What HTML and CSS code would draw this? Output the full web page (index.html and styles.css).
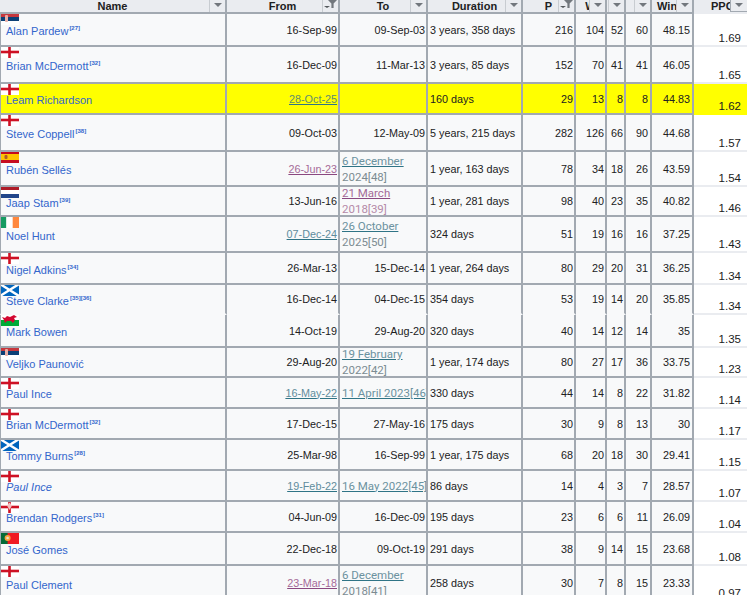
FILE: index.html
```html
<!DOCTYPE html>
<html lang="en">
<head>
<meta charset="utf-8">
<title>Managers</title>
<link rel="stylesheet" href="styles.css">
</head>
<body>
<svg class="defs" aria-hidden="true">
  <symbol id="eng" viewBox="0 0 19 12"><rect width="19" height="12" fill="#fff"/><rect x="8.2" width="2.6" height="12" fill="#ce1124"/><rect y="4.7" width="19" height="2.6" fill="#ce1124"/></symbol>
  <symbol id="srb" viewBox="0 0 19 12"><rect width="19" height="4" fill="#c6363c"/><rect y="4" width="19" height="4" fill="#0c4076"/><rect y="8" width="19" height="4" fill="#fff"/><rect x="5" y="2" width="3" height="7" rx="1" fill="#e8b0a8"/></symbol>
  <symbol id="esp" viewBox="0 0 19 12"><rect width="19" height="12" fill="#c60b1e"/><rect y="3" width="19" height="6" fill="#ffc400"/><rect x="4.5" y="4" width="3" height="4" rx="1" fill="#ad5a2a"/></symbol>
  <symbol id="ned" viewBox="0 0 19 12"><rect width="19" height="4" fill="#ae1c28"/><rect y="4" width="19" height="4" fill="#fff"/><rect y="8" width="19" height="4" fill="#21468b"/></symbol>
  <symbol id="irl" viewBox="0 0 19 12"><rect width="6.4" height="12" fill="#169b62"/><rect x="6.4" width="6.3" height="12" fill="#fff"/><rect x="12.7" width="6.3" height="12" fill="#ff883e"/></symbol>
  <symbol id="sco" viewBox="0 0 19 12"><rect width="19" height="12" fill="#0065bd"/><path d="M0 0L19 12M19 0L0 12" stroke="#fff" stroke-width="2.4"/></symbol>
  <symbol id="wal" viewBox="0 0 19 12"><rect width="19" height="6" fill="#fff"/><rect y="6" width="19" height="6" fill="#00ab39"/><path d="M2 3l3 1 2-2 3 1 4-2 3 2-3 1 1 2-2 3-2-2-4 0-2 2-1-3z" fill="#d30731"/></symbol>
  <symbol id="por" viewBox="0 0 19 12"><rect width="19" height="12" fill="#f01a22"/><rect width="7.6" height="12" fill="#046a38"/><circle cx="7.6" cy="6" r="3" fill="#f7a33a"/><circle cx="7.6" cy="6" r="1.3" fill="#e8e0d0"/></symbol>
  <symbol id="nir" viewBox="0 0 19 12"><rect width="19" height="12" fill="#fff"/><rect x="8.2" width="2.6" height="12" fill="#ce1124"/><rect y="4.7" width="19" height="2.6" fill="#ce1124"/><path d="M9.5 1.5l2.5 3-2.5 4.5-2.5-4.5z" fill="#f3c0c0"/></symbol>
</svg>
<table class="managers">
  <colgroup>
    <col class="c-name"><col class="c-from"><col class="c-to"><col class="c-dur"><col class="c-p"><col class="c-w"><col class="c-d"><col class="c-l"><col class="c-win"><col class="c-ppg">
  </colgroup>
  <thead>
    <tr class="head">
      <th>Name<span class="btn b-name"><i class="tri"></i></span></th>
      <th>From<span class="btn b-from"><i class="tri small"></i><svg class="funnel" viewBox="0 0 9 8"><path d="M0 0H9L5.6 3.6V8H3.4V3.6z"/></svg></span></th>
      <th>To<span class="btn b-to"><i class="tri"></i></span></th>
      <th>Duration<span class="btn b-dur"><i class="tri"></i></span></th>
      <th>P<span class="btn b-p"><i class="tri small"></i><svg class="funnel" viewBox="0 0 9 8"><path d="M0 0H9L5.6 3.6V8H3.4V3.6z"/></svg></span></th>
      <th>W<span class="btn b-w"><i class="tri"></i></span></th>
      <th>D<span class="btn b-d"><i class="tri"></i></span></th>
      <th>L<span class="btn b-l"><i class="tri"></i></span></th>
      <th>Win%<span class="btn b-win"><i class="tri"></i></span></th>
      <th class="ppg-h">PPG<span class="btn b-ppg"><i class="tri"></i></span></th>
    </tr>
  </thead>
  <tbody>
    <tr class="h33">
      <td class="name"><svg class="flag"><use href="#srb"/></svg><a href="#">Alan Pardew</a><sup>[27]</sup></td>
      <td class="num">16-Sep-99</td><td class="num">09-Sep-03</td><td class="dur">3 years, 358 days</td>
      <td class="num">216</td><td class="num">104</td><td class="num">52</td><td class="num pad">60</td><td class="num pad">48.15</td><td class="ppg">1.69</td>
    </tr>
    <tr class="h37">
      <td class="name"><svg class="flag"><use href="#eng"/></svg><a href="#">Brian McDermott</a><sup>[32]</sup></td>
      <td class="num">16-Dec-09</td><td class="num">11-Mar-13</td><td class="dur">3 years, 85 days</td>
      <td class="num">152</td><td class="num">70</td><td class="num">41</td><td class="num pad">41</td><td class="num pad">46.05</td><td class="ppg">1.65</td>
    </tr>
    <tr class="h31 current">
      <td class="name"><svg class="flag"><use href="#eng"/></svg><a href="#">Leam Richardson</a></td>
      <td class="num"><a class="date" href="#">28-Oct-25</a></td><td class="num"></td><td class="dur">160 days</td>
      <td class="num">29</td><td class="num">13</td><td class="num">8</td><td class="num pad">8</td><td class="num pad">44.83</td><td class="ppg">1.62</td>
    </tr>
    <tr class="h37">
      <td class="name"><svg class="flag"><use href="#eng"/></svg><a href="#">Steve Coppell</a><sup>[38]</sup></td>
      <td class="num">09-Oct-03</td><td class="num">12-May-09</td><td class="dur">5 years, 215 days</td>
      <td class="num">282</td><td class="num">126</td><td class="num">66</td><td class="num pad">90</td><td class="num pad">44.68</td><td class="ppg">1.57</td>
    </tr>
    <tr class="h35">
      <td class="name"><svg class="flag"><use href="#esp"/></svg><a href="#">Rubén Sellés</a></td>
      <td class="num"><a class="date seen" href="#">26-Jun-23</a></td><td class="long"><span class="stack"><a class="date" href="#">6 December</a><br>2024[48]</span></td><td class="dur">1 year, 163 days</td>
      <td class="num">78</td><td class="num">34</td><td class="num">18</td><td class="num pad">26</td><td class="num pad">43.59</td><td class="ppg">1.54</td>
    </tr>
    <tr class="h30">
      <td class="name"><svg class="flag"><use href="#ned"/></svg><a href="#">Jaap Stam</a><sup>[39]</sup></td>
      <td class="num">13-Jun-16</td><td class="long seen-long"><span class="stack"><a class="date seen" href="#">21 March</a><br>2018[39]</span></td><td class="dur">1 year, 281 days</td>
      <td class="num">98</td><td class="num">40</td><td class="num">23</td><td class="num pad">35</td><td class="num pad">40.82</td><td class="ppg">1.46</td>
    </tr>
    <tr class="h36">
      <td class="name"><svg class="flag"><use href="#irl"/></svg><a href="#">Noel Hunt</a></td>
      <td class="num"><a class="date" href="#">07-Dec-24</a></td><td class="long"><span class="stack"><a class="date" href="#">26 October</a><br>2025[50]</span></td><td class="dur">324 days</td>
      <td class="num">51</td><td class="num">19</td><td class="num">16</td><td class="num pad">16</td><td class="num pad">37.25</td><td class="ppg">1.43</td>
    </tr>
    <tr class="h32">
      <td class="name"><svg class="flag"><use href="#eng"/></svg><a href="#">Nigel Adkins</a><sup>[34]</sup></td>
      <td class="num">26-Mar-13</td><td class="num">15-Dec-14</td><td class="dur">1 year, 264 days</td>
      <td class="num">80</td><td class="num">29</td><td class="num">20</td><td class="num pad">31</td><td class="num pad">36.25</td><td class="ppg">1.34</td>
    </tr>
    <tr class="h30 open">
      <td class="name"><svg class="flag"><use href="#sco"/></svg><a href="#">Steve Clarke</a><sup>[35][36]</sup></td>
      <td class="num">16-Dec-14</td><td class="num">04-Dec-15</td><td class="dur">354 days</td>
      <td class="num">53</td><td class="num">19</td><td class="num">14</td><td class="num pad">20</td><td class="num pad">35.85</td><td class="ppg">1.34</td>
    </tr>
    <tr class="h33">
      <td class="name"><svg class="flag"><use href="#wal"/></svg><a href="#">Mark Bowen</a></td>
      <td class="num">14-Oct-19</td><td class="num">29-Aug-20</td><td class="dur">320 days</td>
      <td class="num">40</td><td class="num">14</td><td class="num">12</td><td class="num pad">14</td><td class="num pad">35</td><td class="ppg">1.35</td>
    </tr>
    <tr class="h30">
      <td class="name"><svg class="flag"><use href="#srb"/></svg><a href="#">Veljko Paunović</a></td>
      <td class="num">29-Aug-20</td><td class="long"><span class="stack"><a class="date" href="#">19 February</a><br>2022[42]</span></td><td class="dur">1 year, 174 days</td>
      <td class="num">80</td><td class="num">27</td><td class="num">17</td><td class="num pad">36</td><td class="num pad">33.75</td><td class="ppg">1.23</td>
    </tr>
    <tr class="h31">
      <td class="name"><svg class="flag"><use href="#eng"/></svg><a href="#">Paul Ince</a></td>
      <td class="num"><a class="date" href="#">16-May-22</a></td><td class="long"><a class="date" href="#">11 April 2023[46]</a></td><td class="dur">330 days</td>
      <td class="num">44</td><td class="num">14</td><td class="num">8</td><td class="num pad">22</td><td class="num pad">31.82</td><td class="ppg">1.14</td>
    </tr>
    <tr class="h31">
      <td class="name"><svg class="flag"><use href="#eng"/></svg><a href="#">Brian McDermott</a><sup>[32]</sup></td>
      <td class="num">17-Dec-15</td><td class="num">27-May-16</td><td class="dur">175 days</td>
      <td class="num">30</td><td class="num">9</td><td class="num">8</td><td class="num pad">13</td><td class="num pad">30</td><td class="ppg">1.17</td>
    </tr>
    <tr class="h31">
      <td class="name"><svg class="flag"><use href="#sco"/></svg><a href="#">Tommy Burns</a><sup>[28]</sup></td>
      <td class="num">25-Mar-98</td><td class="num">16-Sep-99</td><td class="dur">1 year, 175 days</td>
      <td class="num">68</td><td class="num">20</td><td class="num">18</td><td class="num pad">30</td><td class="num pad">29.41</td><td class="ppg">1.15</td>
    </tr>
    <tr class="h31">
      <td class="name"><svg class="flag"><use href="#eng"/></svg><a class="acting" href="#">Paul Ince</a></td>
      <td class="num"><a class="date" href="#">19-Feb-22</a></td><td class="long"><a class="date" href="#">16 May 2022[45]</a></td><td class="dur">86 days</td>
      <td class="num">14</td><td class="num">4</td><td class="num">3</td><td class="num pad">7</td><td class="num pad">28.57</td><td class="ppg">1.07</td>
    </tr>
    <tr class="h31">
      <td class="name"><svg class="flag"><use href="#nir"/></svg><a href="#">Brendan Rodgers</a><sup>[31]</sup></td>
      <td class="num">04-Jun-09</td><td class="num">16-Dec-09</td><td class="dur">195 days</td>
      <td class="num">23</td><td class="num">6</td><td class="num">6</td><td class="num pad">11</td><td class="num pad">26.09</td><td class="ppg">1.04</td>
    </tr>
    <tr class="h33">
      <td class="name"><svg class="flag"><use href="#por"/></svg><a href="#">José Gomes</a></td>
      <td class="num">22-Dec-18</td><td class="num">09-Oct-19</td><td class="dur">291 days</td>
      <td class="num">38</td><td class="num">9</td><td class="num">14</td><td class="num pad">15</td><td class="num pad">23.68</td><td class="ppg">1.08</td>
    </tr>
    <tr class="h36">
      <td class="name"><svg class="flag"><use href="#eng"/></svg><a href="#">Paul Clement</a></td>
      <td class="num"><a class="date seen" href="#">23-Mar-18</a></td><td class="long"><span class="stack"><a class="date" href="#">6 December</a><br>2018[41]</span></td><td class="dur">258 days</td>
      <td class="num">30</td><td class="num">7</td><td class="num">8</td><td class="num pad">15</td><td class="num pad">23.33</td><td class="ppg">0.97</td>
    </tr>
  </tbody>
</table>
</body>
</html>
```
FILE: styles.css
```css
html, body { margin: 0; padding: 0; height: 595px; overflow: hidden; background: #fff; }
.defs { position: absolute; width: 0; height: 0; }

.managers {
  width: 747px;
  table-layout: fixed;
  border-collapse: separate;
  border-spacing: 0;
  font-family: "Liberation Sans", Arial, sans-serif;
  font-size: 11px;
  color: #202122;
}
.c-name { width: 227px; }
.c-from { width: 113px; }
.c-to { width: 88px; }
.c-dur { width: 95px; }
.c-p { width: 53px; }
.c-w { width: 31px; }
.c-d { width: 19px; }
.c-l { width: 26px; }
.c-win { width: 42px; }
.c-ppg { width: 53px; }

th, td {
  padding: 0;
  border-right: 2px solid #a2a9b1;
  border-bottom: 2px solid #a2a9b1;
  overflow: hidden;
  white-space: nowrap;
}
th {
  position: relative;
  height: 12px;
  line-height: 12px;
  font-size: 11px;
  font-weight: 700;
  background: #eaecf0;
  text-align: center;
}
td { background: #f8f9fa; vertical-align: middle; line-height: 14px; }

.head { height: 14px; }
.h30 { height: 30px; }
.h31 { height: 31px; }
.h32 { height: 32px; }
.h33 { height: 33px; }
.h35 { height: 35px; }
.h36 { height: 36px; }
.h37 { height: 37px; }

.btn {
  position: absolute;
  top: 0;
  right: 0;
  height: 12px;
  background: #eaecf0;
  border-left: 1px solid #c8ccd1;
  display: flex;
  justify-content: center;
  padding-top: 3px;
  box-sizing: border-box;
}
.b-name, .b-to, .b-dur, .b-w, .b-d, .b-l, .b-win { width: 16px; }
.b-from, .b-p { width: 16px; }
.tri {
  width: 0;
  height: 0;
  border-left: 4px solid transparent;
  border-right: 4px solid transparent;
  border-top: 4px solid #72777d;
}
.small {
  position: absolute;
  left: 1px;
  top: 6px;
  border-left-width: 3px;
  border-right-width: 3px;
  border-top-width: 2px;
  border-top-color: #54595d;
}
.funnel {
  position: absolute;
  right: 1px;
  top: 0;
  width: 9px;
  height: 8px;
  fill: #72777d;
}

.ppg-h {
  border-right: 0;
  border-bottom-color: #eaecf0;
  text-align: left;
  padding-left: 17px;
}
.b-ppg {
  width: 17px;
  border-left: 1px solid #a2a9b1;
  border-bottom: 1px solid #a2a9b1;
}

.name { position: relative; border-left: 1px solid #a2a9b1; padding: 3px 0 0 5px; }
.name a { color: #36c; text-decoration: none; }
.name .acting { font-style: italic; }
.name sup { font-size: 6px; font-weight: 700; line-height: 0; color: #36c; vertical-align: 5px; margin-left: 1px; }
.flag { position: absolute; left: -1px; top: -1px; width: 19px; height: 12px; }

.num { text-align: right; padding-right: 1px; font-size: 10.8px; }
.pad { padding-right: 2px; }
.dur { padding-left: 2px; font-size: 10.8px; }

.long {
  padding-left: 2px;
  font-family: Roboto, "Liberation Sans", sans-serif;
  font-size: 11.5px;
  line-height: 16px;
  color: #7c8c92;
}
.stack { display: block; margin: -2px 0; }
.long .date { color: #6c929f; }
.long .seen { color: #a66f9f; }
.seen-long { color: #b58aa8; }

.date {
  color: #5f8c9c;
  text-decoration: underline;
  text-decoration-color: #2f7486;
}
.date.seen { color: #a56a98; text-decoration-color: #8a4880; }

.ppg {
  background: #fff;
  border-right: 0;
  border-bottom-color: #eaecf0;
  text-align: right;
  padding-right: 6px;
  vertical-align: bottom;
  font-size: 11.5px;
  line-height: 13px;
}

.open td { border-bottom-color: #f8f9fa; }
.open .ppg { border-bottom-color: #eaecf0; }
.current td { background: #ff0; }
.current .ppg { border-bottom-color: #ff0; }
.current .date { color: #5f8c70; }
```
